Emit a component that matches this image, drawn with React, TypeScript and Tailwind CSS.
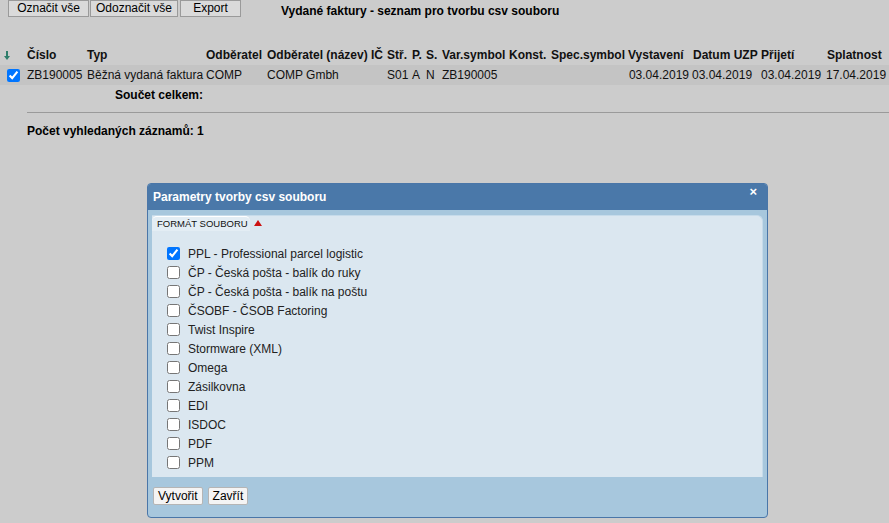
import React from 'react'

const gridCols = 'grid-cols-[27px_60px_119px_61px_104px_16px_25px_14px_16px_67px_42px_77px_64px_69px_65px_63px]'

const formats = [
  'PPL - Professional parcel logistic',
  'ČP - Česká pošta - balík do ruky',
  'ČP - Česká pošta - balík na poštu',
  'ČSOBF - ČSOB Factoring',
  'Twist Inspire',
  'Stormware (XML)',
  'Omega',
  'Zásilkovna',
  'EDI',
  'ISDOC',
  'PDF',
  'PPM'
]

function TopButton({ label, className }: { label: string; className?: string }) {
  return (
    <button
      className={`h-[17px] border border-[#9a9a9a] bg-[#dadada] text-[12px] leading-[15px] text-black ${className ?? ''}`}
    >
      {label}
    </button>
  )
}

function SortArrow() {
  return (
    <svg width="6" height="9" viewBox="0 0 6 9" className="ml-[4px]">
      <rect x="2" y="0" width="2" height="5" fill="#2e7d6a" />
      <polygon points="0,5 6,5 3,9" fill="#2e7d6a" />
    </svg>
  )
}

function InvoiceTable() {
  return (
    <div className="mt-[25px] text-[12px] leading-[14px]">
      <div className={`grid ${gridCols} h-[20px] items-center font-bold text-[#111]`}>
        <span className="flex">
          <SortArrow />
        </span>
        <span>Číslo</span>
        <span>Typ</span>
        <span>Odběratel</span>
        <span>Odběratel (název)</span>
        <span>IČ</span>
        <span>Stř.</span>
        <span>P.</span>
        <span>S.</span>
        <span>Var.symbol</span>
        <span>Konst.</span>
        <span>Spec.symbol</span>
        <span>Vystavení</span>
        <span className="pl-[1px]">Datum UZP</span>
        <span>Přijetí</span>
        <span className="pl-[1px]">Splatnost</span>
      </div>
      <div className={`grid ${gridCols} h-[20px] items-center bg-[#c4c4c4] text-[#111]`}>
        <span className="flex pl-[7px]">
          <input type="checkbox" defaultChecked readOnly className="m-0 size-[13px] accent-[#0075ff]" />
        </span>
        <span>ZB190005</span>
        <span>Běžná vydaná faktura</span>
        <span>COMP</span>
        <span>COMP Gmbh</span>
        <span></span>
        <span>S01</span>
        <span>A</span>
        <span>N</span>
        <span>ZB190005</span>
        <span></span>
        <span></span>
        <span className="text-right pr-[3px]">03.04.2019</span>
        <span className="text-right pr-[9px]">03.04.2019</span>
        <span className="text-right pr-[5px]">03.04.2019</span>
        <span className="text-right pr-[3px]">17.04.2019</span>
      </div>
      <div className="h-[20px] flex items-center pl-[115px] font-bold">Součet celkem:</div>
      <div className="ml-[27px] mt-[7px] h-px bg-[#9a9a9a]" />
      <div className="mt-[11px] pl-[27px] font-bold">Počet vyhledaných záznamů: 1</div>
    </div>
  )
}

function Dialog() {
  return (
    <div className="ml-[147px] mt-[45px] w-[621px] rounded-[4px] border border-[#4a76a8] bg-[#a7c7dd] text-[12px]">
      <div className="relative flex h-[26px] items-center rounded-t-[3px] bg-[#4a78a9] pl-[5px] font-bold text-white text-[12px]">
        Parametry tvorby csv souboru
        <span className="absolute right-[10px] top-[1px] text-[13px] font-bold leading-[14px]">×</span>
      </div>
      <div className="px-[4px] pt-[5px]">
        <div className="rounded-tr-[6px] border-t border-r border-[#c6dbea] bg-[#dbe7f0] pb-[5px]">
          <div className="flex h-[15px] items-center">
            <div className="flex h-[15px] w-[98px] items-center whitespace-nowrap rounded-t-[5px] border-t border-white bg-[#e3edf4] pl-[5px] text-[9.5px] text-[#111]">
              FORMÁT SOUBORU
            </div>
            <svg width="8" height="6" viewBox="0 0 8 6" className="ml-[4px] mb-[2px]">
              <polygon points="4,0 8,6 0,6" fill="#cc1111" />
            </svg>
          </div>
          <div className="pl-[15px] pt-[13px]">
            {formats.map((f, i) => (
              <label key={f} className="flex h-[19px] items-center gap-[8px] text-[#222]">
                <input
                  type="checkbox"
                  defaultChecked={i === 0}
                  className="m-0 size-[13px] accent-[#0075ff]"
                />
                <span>{f}</span>
              </label>
            ))}
          </div>
        </div>
      </div>
      <div className="flex gap-[5px] px-[5px] pb-[12px] pt-[10px]">
        <button className="h-[18px] rounded-[2px] border border-[#b5b5b5] bg-[#f4f4f4] px-[4px] text-[12px] leading-[14px] text-black">
          Vytvořit
        </button>
        <button className="h-[18px] rounded-[2px] border border-[#b5b5b5] bg-[#f4f4f4] px-[4px] text-[12px] leading-[14px] text-black">
          Zavřít
        </button>
      </div>
    </div>
  )
}

export default function App() {
  return (
    <div className="h-[523px] w-[889px] overflow-hidden bg-[#cccccc] font-['Liberation_Sans',Arial,sans-serif] text-black">
      <div className="flex items-start">
        <TopButton label="Označit vše" className="ml-[8px] w-[81px]" />
        <TopButton label="Odoznačit vše" className="ml-[1px] w-[88px]" />
        <TopButton label="Export" className="ml-[2px] w-[61px]" />
        <div className="ml-[40px] pt-[2px] text-[12px] font-bold">Vydané faktury - seznam pro tvorbu csv souboru</div>
      </div>
      <InvoiceTable />
      <Dialog />
    </div>
  )
}
